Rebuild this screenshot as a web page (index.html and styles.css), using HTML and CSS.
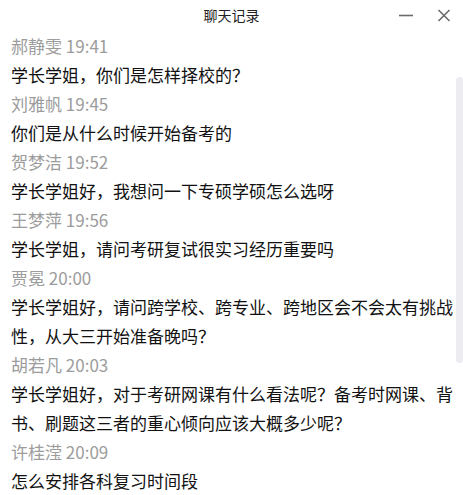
FILE: index.html
```html
<!DOCTYPE html>
<html lang="zh-CN">
<head>
<meta charset="utf-8">
<title>聊天记录</title>
<link rel="stylesheet" href="styles.css">
</head>
<body>
<div class="window">
  <header class="titlebar">
    <div class="title">聊天记录</div>
    <div class="controls">
      <svg class="ctl" width="16" height="16" viewBox="0 0 16 16"><path d="M1 8.5h14" stroke="#6b6b6b" stroke-width="1.6"/></svg>
      <svg class="ctl" width="16" height="16" viewBox="0 0 16 16"><path d="M2.5 3l11 11M13.5 3l-11 11" stroke="#6b6b6b" stroke-width="1.6"/></svg>
    </div>
  </header>
  <main class="list">
    <div class="item"><div class="meta">郝静雯 19:41</div><div class="msg">学长学姐，你们是怎样择校的？</div></div>
    <div class="item"><div class="meta">刘雅帆 19:45</div><div class="msg">你们是从什么时候开始备考的</div></div>
    <div class="item"><div class="meta">贺梦洁 19:52</div><div class="msg">学长学姐好，我想问一下专硕学硕怎么选呀</div></div>
    <div class="item"><div class="meta">王梦萍 19:56</div><div class="msg">学长学姐，请问考研复试很实习经历重要吗</div></div>
    <div class="item"><div class="meta">贾冕 20:00</div><div class="msg">学长学姐好，请问跨学校、跨专业、跨地区会不会太有挑战性，从大三开始准备晚吗？</div></div>
    <div class="item"><div class="meta">胡若凡 20:03</div><div class="msg">学长学姐好，对于考研网课有什么看法呢？备考时网课、背书、刷题这三者的重心倾向应该大概多少呢？</div></div>
    <div class="item"><div class="meta">许桂滢 20:09</div><div class="msg">怎么安排各科复习时间段</div></div>
  </main>
  <div class="scrollbar"></div>
</div>
</body>
</html>
```
FILE: styles.css
```css
* { box-sizing: border-box; }
html, body { margin: 0; padding: 0; background: #fff; }
body {
  font-family: "Noto Sans CJK SC", "Microsoft YaHei", sans-serif;
  color: #111;
  width: 463px;
  height: 495px;
  overflow: hidden;
}
.window { position: relative; width: 463px; height: 495px; }
.titlebar {
  height: 31px;
  display: flex;
  align-items: center;
  justify-content: center;
  position: relative;
}
.title { font-size: 14px; color: #222; line-height: 31px; }
.controls {
  position: absolute;
  right: 11px;
  top: 7px;
  display: flex;
  gap: 22px;
}
.ctl { display: block; }
.list {
  padding-left: 11px;
  width: 455px;
}
.item { display: flex; flex-direction: column; }
.meta {
  font-size: 17px;
  line-height: 29px;
  color: #9c9c9c;
}
.msg {
  font-size: 17px;
  line-height: 29px;
  color: #111;
}
.scrollbar {
  position: absolute;
  left: 456px;
  top: 77px;
  width: 7px;
  height: 286px;
  border-radius: 4px;
  background: #ececf1;
}
```
